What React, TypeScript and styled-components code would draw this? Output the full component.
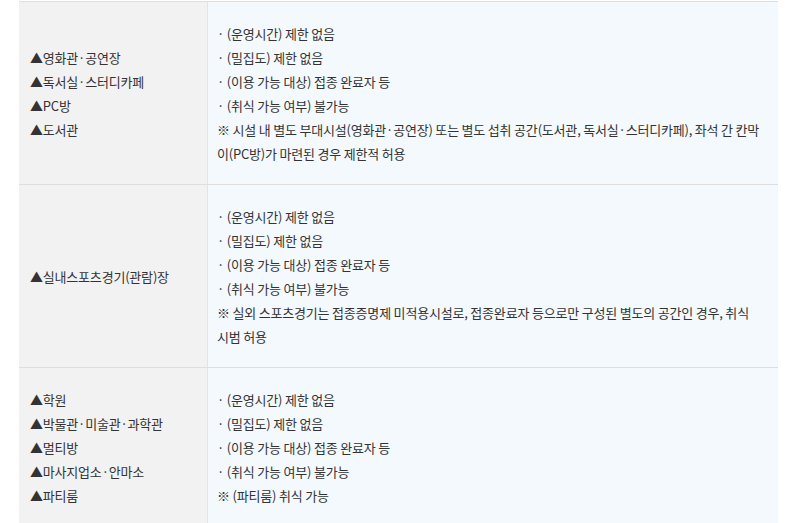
import { Fragment } from "react";
import styled, { createGlobalStyle } from "styled-components";

const GlobalStyle = createGlobalStyle`
  html, body {
    margin: 0;
    padding: 0;
    background: #fff;
  }
  body {
    font-family: "Noto Sans CJK KR", "Noto Sans", sans-serif;
    color: #333;
  }
`;

interface Row {
  places: string[];
  rules: string[];
}

// \u2060 keeps a word together where the original page wrapped by whole word
const rows: Row[] = [
  {
    places: ["▲영화관·공연장", "▲독서실·스터디카페", "▲PC방", "▲도서관"],
    rules: [
      "· (운영시간) 제한 없음",
      "· (밀집도) 제한 없음",
      "· (이용 가능 대상) 접종 완료자 등",
      "· (취식 가능 여부) 불가능",
      "※ 시설 내 별도 부대시설(영화관·공연장) 또는 별도 섭취 공간(도서관, 독서실·스터디카페), 좌석 간 칸막이(PC방)가 마련된 경우 제한적 허용",
    ],
  },
  {
    places: ["▲실내스포츠경기(관람)장"],
    rules: [
      "· (운영시간) 제한 없음",
      "· (밀집도) 제한 없음",
      "· (이용 가능 대상) 접종 완료자 등",
      "· (취식 가능 여부) 불가능",
      "※ 실외 스포츠경기는 접종증명제 미적용시설로, 접종완료자 등으로만 구성된 별도의 공간인 경우, 취식 시\u2060범 허용",
    ],
  },
  {
    places: ["▲학원", "▲박물관·미술관·과학관", "▲멀티방", "▲마사지업소·안마소", "▲파티룸"],
    rules: [
      "· (운영시간) 제한 없음",
      "· (밀집도) 제한 없음",
      "· (이용 가능 대상) 접종 완료자 등",
      "· (취식 가능 여부) 불가능",
      "※ (파티룸) 취식 가능",
    ],
  },
];

const Page = styled.div`
  padding: 1px 8px 0 19px;
`;

const Table = styled.div`
  width: 759px;
  display: grid;
  grid-template-columns: 189px 1fr;
  border-top: 1px solid #dedede;
`;

const Cell = styled.div<{ $head?: boolean }>`
  display: flex;
  flex-direction: column;
  justify-content: center;
  padding: ${(p) => (p.$head ? "20px 11px 18px" : "20px 10px 18px 9px")};
  background: ${(p) => (p.$head ? "#f2f2f2" : "#f3f9fd")};
  border-bottom: 1px solid #dedede;
  ${(p) => p.$head && "border-right: 1px solid #e4e4e4;"}
  font-size: 13px;
  line-height: 24px;
  letter-spacing: -0.015em;
  color: #333;
`;

const Line = styled.p`
  margin: 0;
  word-break: normal;
  line-break: loose;
`;

export default function App() {
  return (
    <>
      <GlobalStyle />
      <Page>
        <Table>
          {rows.map((row, i) => (
            <Fragment key={i}>
              <Cell $head>
                {row.places.map((p) => (
                  <Line key={p}>{p}</Line>
                ))}
              </Cell>
              <Cell>
                {row.rules.map((r) => (
                  <Line key={r}>{r}</Line>
                ))}
              </Cell>
            </Fragment>
          ))}
        </Table>
      </Page>
    </>
  );
}
